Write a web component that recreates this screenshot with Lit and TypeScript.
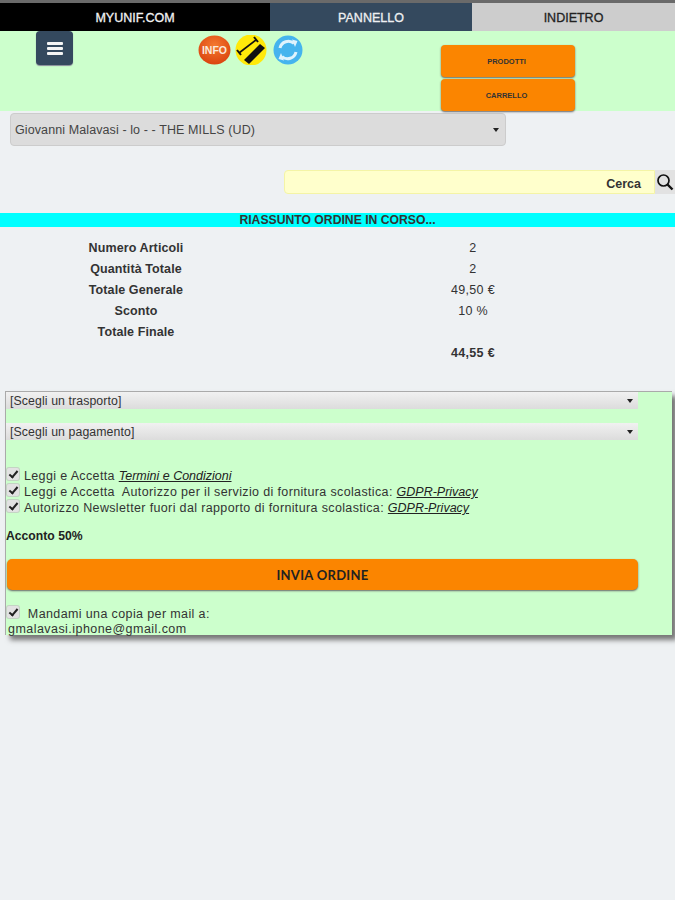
import { LitElement, html, css } from "lit";
import { customElement } from "lit/decorators.js";

@customElement("app-root")
export class AppRoot extends LitElement {
  static styles = css`
    :host { display: block; width: 675px; height: 900px; background: #eef1f3; font-family: "Liberation Sans", Arial, sans-serif; color: #222; overflow: hidden; }
    .strip { height: 3px; background: #6a6a6a; }
    .nav { display: grid; grid-template-columns: 270px 202px 203px; height: 28px; }
    .nav div { display: flex; align-items: center; justify-content: center; font-size: 12.5px; -webkit-text-stroke: 0.3px currentColor; padding-top: 1px; box-sizing: border-box; }
    .n1 { background: #000; color: #f2f2f2; }
    .n2 { background: #34495e; color: #eef0f2; }
    .n3 { background: #cdcdcd; color: #222; }
    .header { display: flex; height: 80px; background: #ccffcc; align-items: flex-start; }
    .menu { margin-left: 36px; width: 37px; height: 34px; border-radius: 4px; background: #34495e; box-shadow: 0 1px 1px #889; display: flex; flex-direction: column; justify-content: center; align-items: center; gap: 2px; }
    .menu i { display: block; width: 16px; height: 3px; border-radius: 1px; background: #f4f4f4; }
    .icons { display: flex; margin-left: 125px; margin-top: 4px; align-items: center; }
    .icons svg { display: block; }
    .btns { margin-left: 138px; margin-top: 14px; display: flex; flex-direction: column; gap: 2px; }
    .obtn { width: 134px; height: 32px; border-radius: 4px; background: #fb8500; box-shadow: 0 1px 2px #666; display: flex; align-items: center; justify-content: center; font-size: 7.5px; color: #333; font-weight: 700; padding-right: 3px; box-sizing: border-box; }
    .main-sel { margin: 2px 0 0 10px; width: 496px; height: 33px; box-sizing: border-box; border: 1px solid #ccc; border-radius: 4px; background: #dcdcdc; display: flex; align-items: center; justify-content: space-between; padding: 0 6px 0 4px; font-size: 12.5px; letter-spacing: 0.1px; color: #444; }
    .arrow { width: 0; height: 0; border-left: 3px solid transparent; border-right: 3px solid transparent; border-top: 4.5px solid #222; }
    .search { margin: 24px 0 0 284px; display: flex; height: 24px; }
    .sfield { width: 371px; box-sizing: border-box; background: #ffffcc; border: 1px solid #f4f4a6; border-radius: 4px 0 0 4px; display: flex; align-items: center; justify-content: flex-end; padding: 3px 13px 0 0; font-size: 12.5px; font-weight: 700; color: #333; }
    .sbtn { width: 20px; background: #e2e2e2; display: flex; align-items: center; justify-content: center; }
    .banner { margin-top: 19px; height: 14px; background: #00ffff; display: flex; align-items: center; justify-content: center; font-size: 12.2px; font-weight: 700; color: #333; }
    .summary { display: grid; grid-template-columns: 272px 402px; grid-auto-rows: 21px; margin-top: 10px; font-size: 12.5px; }
    .summary div { display: flex; align-items: center; justify-content: center; color: #333; letter-spacing: 0.3px; }
    .summary .k { font-weight: 700; letter-spacing: 0.1px; }
    .summary .tot { grid-column: 2; font-weight: 700; }
    .panel { margin: 28px 0 0 5px; width: 667px; height: 244px; box-sizing: border-box; border: 1px solid #aaa; border-right: 0; border-bottom: 0; background: #ccffcc; box-shadow: 5px 5px 5px #777; }
    .psel { width: 632px; height: 17px; box-sizing: border-box; background: linear-gradient(#f1f1f1, #dcdcdc); display: flex; align-items: center; justify-content: space-between; padding: 0 5px 0 4px; font-size: 12.3px; letter-spacing: 0.1px; color: #333; }
    .psel + .psel { margin-top: 14px; }
    .checks { margin-top: 28px; display: flex; flex-direction: column; padding-left: 1px; }
    .row { display: flex; align-items: center; height: 16px; font-size: 12.5px; letter-spacing: 0.36px; color: #333; white-space: pre; }
    .cb { appearance: none; -webkit-appearance: none; display: block; position: relative; top: -2px; width: 12px; height: 12px; margin: 0 5px 0 0; flex: none; border-radius: 2px; background: #e2e2e2; border: 0; box-shadow: 0 0 0 1px #c4d4c4; }
    .cb:checked::after { content: ""; position: absolute; left: 4px; top: 1px; width: 3px; height: 7px; border: solid #222; border-width: 0 2px 2px 0; transform: rotate(40deg); }
    .row a { color: #222; font-style: italic; text-decoration: underline; letter-spacing: 0; }
    .acc { margin-top: 13px; font-size: 12.2px; font-weight: 700; color: #222; line-height: 14px; }
    .send { margin: 16px 0 0 1px; width: 631px; height: 31px; border-radius: 5px; background: #fb8500; box-shadow: 0 1px 2px #666; display: flex; align-items: center; justify-content: center; font-family: Lato, sans-serif; font-size: 13px; font-weight: 700; color: #222; letter-spacing: 0.3px; }
    .copy { margin-top: 17px; padding-left: 1px; font-size: 12.5px; letter-spacing: 0.38px; color: #333; line-height: 14px; }
    .copy .l1 { display: flex; align-items: center; white-space: pre; height: 14px; }
    .copy .l2 { padding-left: 1px; margin-top: 1px; letter-spacing: 0.45px; }
  `;

  private check() {
    return html`<input class="cb" type="checkbox" checked />`;
  }

  render() {
    return html`
      <div class="strip"></div>
      <nav class="nav">
        <div class="n1">MYUNIF.COM</div>
        <div class="n2">PANNELLO</div>
        <div class="n3">INDIETRO</div>
      </nav>
      <header class="header">
        <div class="menu"><i></i><i></i><i></i></div>
        <div class="icons">
          <svg width="36" height="30" viewBox="0 0 36 30">
            <defs><radialGradient id="r" cx="50%" cy="35%" r="70%"><stop offset="0" stop-color="#f47a30"/><stop offset="1" stop-color="#d9400d"/></radialGradient></defs>
            <ellipse cx="16.5" cy="15" rx="16" ry="14.5" fill="url(#r)"/>
            <text x="16.5" y="18.5" text-anchor="middle" font-family="Liberation Sans" font-weight="700" font-size="10.5" fill="#fbe9dc">INFO</text>
          </svg>
          <svg width="39" height="30" viewBox="0 0 39 30">
            <circle cx="17" cy="15" r="15.5" fill="#ffe90a"/>
            <path d="M10 25 L26 9 L31 13 L15 29 Z" fill="#111"/>
            <path d="M5 18 L22 5" stroke="#111" stroke-width="1.6" fill="none"/>
            <path d="M3 15 L7 20 M20 2 L24 7" stroke="#111" stroke-width="2" fill="none"/>
          </svg>
          <svg width="30" height="30" viewBox="0 0 30 30">
            <circle cx="15" cy="15" r="14.5" fill="#45b4ee"/>
            <path d="M7 13 A8.5 8.5 0 0 1 21 8.5" stroke="#dff3fd" stroke-width="3" fill="none"/>
            <path d="M19 4.5 L24.5 6 L22 12 Z" fill="#dff3fd"/>
            <path d="M23 17 A8.5 8.5 0 0 1 9 21.5" stroke="#dff3fd" stroke-width="3" fill="none"/>
            <path d="M11 25.5 L5.5 24 L8 18 Z" fill="#dff3fd"/>
          </svg>
        </div>
        <div class="btns">
          <div class="obtn">PRODOTTI</div>
          <div class="obtn">CARRELLO</div>
        </div>
      </header>
      <div class="main-sel"><span>Giovanni Malavasi - lo - - THE MILLS (UD)</span><span class="arrow"></span></div>
      <div class="search">
        <div class="sfield">Cerca</div>
        <div class="sbtn">
          <svg width="18" height="18" viewBox="0 0 18 18" fill="none" stroke="#111">
            <circle cx="7.5" cy="7.5" r="5.5" stroke-width="1.7"/>
            <path d="M11.5 11.5 L16.5 16.5" stroke-width="2.4"/>
          </svg>
        </div>
      </div>
      <div class="banner">RIASSUNTO ORDINE IN CORSO...</div>
      <section class="summary">
        <div class="k">Numero Articoli</div><div>2</div>
        <div class="k">Quantità Totale</div><div>2</div>
        <div class="k">Totale Generale</div><div>49,50 €</div>
        <div class="k">Sconto</div><div>10 %</div>
        <div class="k">Totale Finale</div><div></div>
        <div class="tot">44,55 €</div>
      </section>
      <section class="panel">
        <div class="psel"><span>[Scegli un trasporto]</span><span class="arrow"></span></div>
        <div class="psel"><span>[Scegli un pagamento]</span><span class="arrow"></span></div>
        <div class="checks">
          <label class="row">${this.check()}<span>Leggi e Accetta <a>Termini e Condizioni</a></span></label>
          <label class="row">${this.check()}<span>Leggi e Accetta  Autorizzo per il servizio di fornitura scolastica: <a>GDPR-Privacy</a></span></label>
          <label class="row">${this.check()}<span>Autorizzo Newsletter fuori dal rapporto di fornitura scolastica: <a>GDPR-Privacy</a></span></label>
        </div>
        <div class="acc">Acconto 50%</div>
        <div class="send">INVIA ORDINE</div>
        <div class="copy">
          <label class="l1">${this.check()}<span> Mandami una copia per mail a:</span></label>
          <div class="l2">gmalavasi.iphone@gmail.com</div>
        </div>
      </section>
    `;
  }
}
